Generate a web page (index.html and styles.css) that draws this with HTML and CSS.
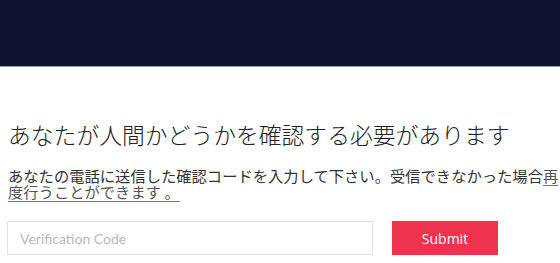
FILE: index.html
```html
<!DOCTYPE html>
<html lang="ja">
<head>
<meta charset="utf-8">
<link rel="stylesheet" href="styles.css">
</head>
<body>
<header class="topbar"></header>
<main class="content">
  <h1 class="title">あなたが人間かどうかを確認する必要があります</h1>
  <p class="desc">あなたの電話に送信した確認コードを入力して下さい。受信できなかった場合<a class="resend" href="#">再度行うことができます 。</a></p>
  <form class="verify">
    <input class="code" type="text" placeholder="Verification Code">
    <button class="submit" type="button">Submit</button>
  </form>
</main>
</body>
</html>
```
FILE: styles.css
```css
html, body {
  margin: 0;
  padding: 0;
  background: #ffffff;
}
body {
  font-family: "Noto Sans CJK JP", "Noto Sans", sans-serif;
  color: #222;
}
.topbar {
  height: 66px;
  background: #0f1330;
  border-bottom: 1px solid #9a9cb8;
}
.content {
  padding: 52px 0 0 8px;
}
.title {
  margin: 0;
  font-size: 22.8px;
  font-weight: 300;
  line-height: 32px;
  color: #222;
}
.desc {
  margin: 17px 0 0 0;
  font-size: 15.3px;
  line-height: 15.5px;
  color: #333;
}
.resend {
  color: #555;
  text-decoration: underline;
  text-decoration-color: #777;
  text-underline-offset: 3px;
}
.verify {
  display: flex;
  align-items: stretch;
  gap: 19px;
  margin-top: 22px;
  padding-left: 0;
}
.code {
  box-sizing: border-box;
  width: 366px;
  height: 34px;
  margin-left: -1px;
  border: 1px solid #e3e3e3;
  padding: 0 12px;
  font-family: "Lato", sans-serif;
  font-size: 14px;
  color: #333;
  outline: none;
}
.code::placeholder {
  color: #b9b9b9;
}
.submit {
  box-sizing: border-box;
  width: 106px;
  height: 34px;
  border: none;
  background: #ef334f;
  color: #fff;
  font-family: "Open Sans", sans-serif;
  font-size: 14px;
  cursor: pointer;
}
```
